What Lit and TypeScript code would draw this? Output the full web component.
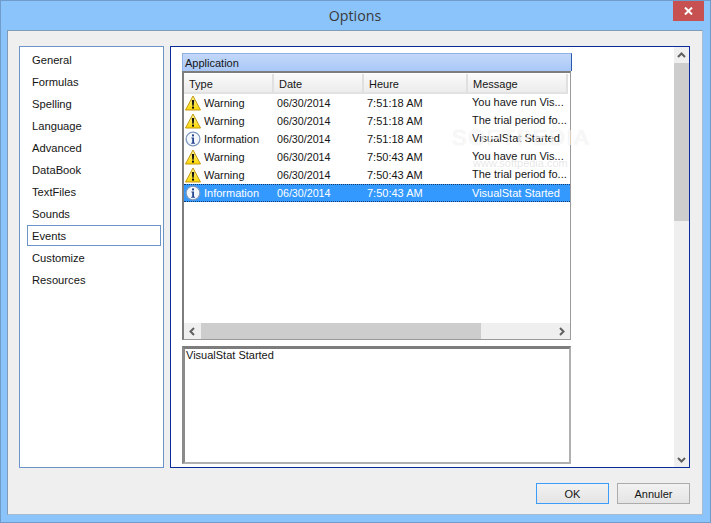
import { LitElement, html, css } from "lit";
import { customElement } from "lit/decorators.js";

const warn = html`<svg class="ico" width="16" height="16" viewBox="0 0 16 16">
  <defs><linearGradient id="wg" x1="0" y1="0" x2="0" y2="1"><stop offset="0" stop-color="#fff6a0"/><stop offset="1" stop-color="#ffd800"/></linearGradient></defs>
  <path d="M8 1 15.5 15H.5Z" fill="url(#wg)" stroke="#c49a12" stroke-width="1" stroke-linejoin="round"/>
  <path d="M6.8 5h2.4l-.5 5.8H7.3Z" fill="#111"/><rect x="7" y="11.6" width="2" height="2" fill="#111"/>
</svg>`;
const info = html`<svg class="ico" width="16" height="16" viewBox="0 0 16 16">
  <circle cx="8" cy="8" r="6.9" fill="#f4f8fd" stroke="#7d97bf" stroke-width="1.3"/>
  <rect x="7" y="3.4" width="2" height="2" fill="#27468f"/><path d="M6.4 6.4H9v5.4h1v1H6.2v-1h1V7.4h-.8Z" fill="#27468f"/>
</svg>`;

const nav = ["General","Formulas","Spelling","Language","Advanced","DataBook","TextFiles","Sounds","Events","Customize","Resources"];
const rows = [
  ["w","Warning","7:51:18 AM","You have run Vis..."],
  ["w","Warning","7:51:18 AM","The trial period fo..."],
  ["i","Information","7:51:18 AM","VisualStat Started"],
  ["w","Warning","7:50:43 AM","You have run Vis..."],
  ["w","Warning","7:50:43 AM","The trial period fo..."],
  ["i","Information","7:50:43 AM","VisualStat Started"],
];
const arrow = (d: string) => html`<svg width="9" height="9" viewBox="0 0 9 9"><path d=${d} fill="none" stroke="#606060" stroke-width="2"/></svg>`;

@customElement("app-root")
export class AppRoot extends LitElement {
  static styles = css`
    :host { display:block; width:711px; height:523px; font:11px "Liberation Sans",Arial,sans-serif; color:#151515; }
    * { box-sizing:border-box; }
    .win { width:711px; height:523px; background:#8ac4fb; border:1px solid #6f9ccb; padding:0 7px 7px 6px; display:flex; flex-direction:column; position:relative; }
    .title { height:29px; flex:none; display:flex; align-items:center; justify-content:center; font:14.2px "Open Sans","Liberation Sans",sans-serif; color:#3a3a3a; }
    .close { position:absolute; right:6px; top:0; width:31px; height:20px; background:#c75050; display:flex; align-items:center; justify-content:center; }
    .client { flex:1; background:#efefef; border:1px solid #7f9db9; border-right-color:#a5bdd3; border-bottom-color:#a5bdd3; padding:15px 12px 0 11px; display:flex; flex-direction:column; }
    .main { display:flex; gap:6px; height:422px; flex:none; }
    .nav { width:145px; height:422px; flex:none; background:#fff; border:1px solid #6d94c8; padding:2px 2px 0 7px; display:flex; flex-direction:column; font-size:11.2px; }
    .nav div { height:22px; flex:none; padding-left:5px; display:flex; align-items:center; }
    .nav div.sel { height:21px; margin-bottom:1px; border:1px solid #6d94c8; padding-left:4px; }
    .panel { flex:1; background:#fff; border:1px solid #0a2c9c; display:flex; position:relative; }
    .content { flex:1; padding:6px 0 0 11px; display:flex; flex-direction:column; }
    .vs { width:15px; flex:none; background:#efefef; display:flex; flex-direction:column; align-items:center; }
    .vs .ab { height:16px; flex:none; display:flex; align-items:center; justify-content:center; }
    .vs .th { height:158px; flex:none; width:100%; background:#cdcdcd; }
    .vs .g { flex:1; }
    .app { width:390px; height:18px; flex:none; background:linear-gradient(#c3d8f9,#a9c8f8); border:1px solid #8fb2e6; border-bottom:0; border-right-color:#2a5ab0; padding-left:2px; display:flex; align-items:center; }
    .list { width:389px; height:269px; flex:none; background:#fff; border:2px solid #7d7d7d; border-right:1px solid #9a9a9a; border-bottom:1px solid #9a9a9a; display:flex; flex-direction:column; padding:1px 0 0 0; }
    .hdr { display:grid; grid-template-columns:90px 90px 104px 100px; height:20px; flex:none; }
    .hdr div { background:linear-gradient(#fafafa,#ececec); border-right:2px solid #e0e0e0; border-bottom:2px solid #e2e2e2; padding:2px 0 0 5px; display:flex; align-items:center; }
    .body { flex:1; display:flex; flex-direction:column; }
    .row { display:grid; grid-template-columns:93px 90px 105px 98px; height:18px; flex:none; align-items:center; white-space:nowrap; }
    .row.sel { background:#3399ff; color:#fff; border-top:1px dotted #103a70; border-bottom:1px dotted #103a70; }
    .row > span { overflow:hidden; }
    .row > .msg { padding-bottom:2px; }
    .row.sel > .msg { padding-bottom:0; }
    .date { font-size:10.7px; }
    .tc { display:flex; align-items:center; gap:3px; padding-left:1px; }
    .ico { flex:none; display:block; }
    .sp { flex:1; }
    .hs { height:16px; flex:none; background:#efefef; display:flex; align-items:center; }
    .hs .ab { width:17px; flex:none; display:flex; justify-content:center; }
    .hs .th { width:280px; height:16px; background:#cdcdcd; flex:none; }
    .hs .g { flex:1; }
    .detail { width:389px; height:118px; flex:none; margin-top:6px; background:#fff; border:2px solid #b0b0b0; border-top:3px solid #7d7d7d; border-left:3px solid #8a8a8a; padding:0 0 0 1px; line-height:13px; }
    .foot { flex:1; display:flex; justify-content:flex-end; gap:8px; padding:15px 0 0 0; }
    .btn { width:73px; height:21px; display:flex; align-items:center; justify-content:center; background:linear-gradient(#f2f2f2,#e4e4e4); border:1px solid #acacac; }
    .btn.def { border-color:#3c9cfb; }
    .wm { position:absolute; left:281px; top:78px; font:22px/25px "Liberation Sans",sans-serif; letter-spacing:1.5px; color:rgba(255,255,255,.75); text-shadow:0 0 1px rgba(170,170,170,.35); pointer-events:none; }
    .wm2 { position:absolute; left:302px; top:110px; font:11px/12px "Liberation Sans",sans-serif; color:rgba(170,170,170,.3); pointer-events:none; }
  `;
  render() {
    return html`<div class="win">
      <div class="title">Options</div>
      <div class="close"><svg width="9" height="8" viewBox="0 0 9 8"><path d="M1 .5l7 7M8 .5l-7 7" stroke="#fff" stroke-width="2" fill="none"/></svg></div>
      <div class="client">
        <div class="main">
          <div class="nav">${nav.map(n => html`<div class=${n === "Events" ? "sel" : ""}>${n}</div>`)}</div>
          <div class="panel">
            <div class="content">
              <div class="app">Application</div>
              <div class="list">
                <div class="hdr"><div>Type</div><div>Date</div><div>Heure</div><div>Message</div></div>
                <div class="body">
                  ${rows.map((r, i) => html`<div class="row ${i === 5 ? "sel" : ""}">
                    <span class="tc">${r[0] === "w" ? warn : info}${r[1]}</span><span class="date">06/30/2014</span><span>${r[2]}</span><span class="msg">${r[3]}</span>
                  </div>`)}
                  <div class="sp"></div>
                  <div class="hs"><div class="ab">${arrow("M6 1 2.5 4.5 6 8")}</div><div class="th"></div><div class="g"></div><div class="ab">${arrow("M3 1 6.5 4.5 3 8")}</div></div>
                </div>
              </div>
              <div class="detail">VisualStat Started</div>
            </div>
            <div class="vs">
              <div class="ab">${arrow("M1 6 4.5 2.5 8 6")}</div>
              <div class="th"></div><div class="g"></div>
              <div class="ab">${arrow("M1 3 4.5 6.5 8 3")}</div>
            </div>
            <div class="wm">SOFTPEDIA</div>
            <div class="wm2">www.softpedia.com</div>
          </div>
        </div>
        <div class="foot"><div class="btn def">OK</div><div class="btn">Annuler</div></div>
      </div>
    </div>`;
  }
}
